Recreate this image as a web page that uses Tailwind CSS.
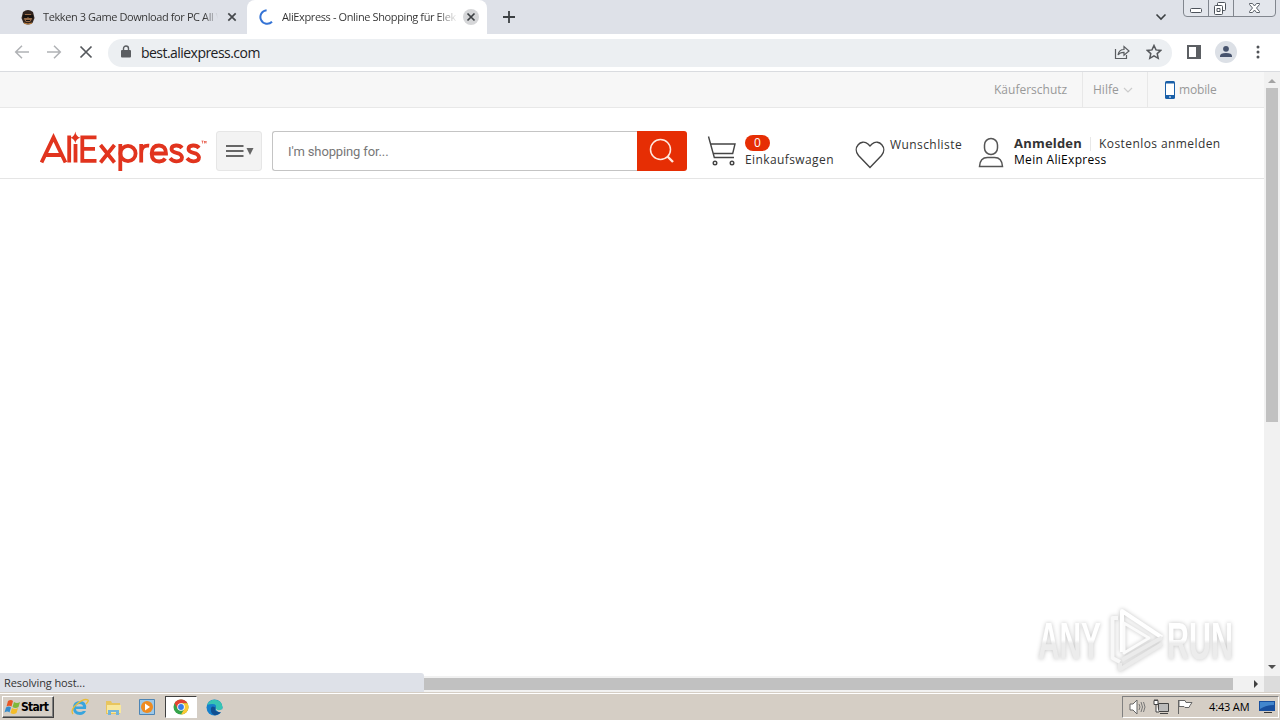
<!DOCTYPE html>
<html lang="de"><head><meta charset="utf-8"><title>AliExpress</title>
<script src="https://cdn.jsdelivr.net/npm/@tailwindcss/browser@4"></script></head>
<body class="w-[1280px] h-[720px] overflow-hidden bg-white flex flex-col font-['Open_Sans','Noto_Sans',sans-serif] text-[#333] whitespace-nowrap">
<!-- Tab strip -->
<div class="h-[34px] shrink-0 bg-[#dee1e8] flex">
  <div class="w-[247px] h-[34px] flex items-center pl-5">
    <svg class="w-4 h-4 shrink-0" viewBox="0 0 16 16"><path d="M3 3Q8-1 13 3l1.500 6-2 5Q8 17 3.500 14l-2-5z" fill="#30231d"/><path d="M5 5h6l1 5-2 3H6l-2-3z" fill="#976b48"/><path d="M3 6h10v3H9L8 8 7 9H3zM6 11h4v1H6z" fill="#17120f"/><path d="M4 14q4 2 8 0" stroke="#c9853d" fill="none"/></svg>
    <span class="ml-[7px] w-[175px] overflow-hidden text-[11px] tracking-[-0.4px] bg-linear-to-r from-[#333] from-92% to-transparent bg-clip-text text-transparent">Tekken 3 Game Download for PC All V</span>
    <svg class="w-[10px] h-[10px] ml-[9px] shrink-0" viewBox="0 0 10 10"><path d="M1.300 1.300l7.400 7.400m0-7.400l-7.400 7.400" stroke="#45484c" stroke-width="1.700"/></svg>
  </div>
  <div class="w-[240px] bg-white rounded-t-[8px] flex items-center pl-3">
    <svg class="w-4 h-4 shrink-0" viewBox="0 0 16 16"><path d="M7.600 1.200A6.800 6.800 0 1 0 13 12.800" stroke="#3473d5" stroke-width="2" fill="none"/></svg>
    <span class="ml-[7px] w-[176px] overflow-hidden text-[11px] tracking-[-0.38px] bg-linear-to-r from-[#333] from-88% to-transparent bg-clip-text text-transparent">AliExpress - Online Shopping für Elek</span>
    <svg class="w-4 h-4 ml-[5px] shrink-0" viewBox="0 0 16 16"><circle cx="8" cy="8" r="8" fill="#d5d6d8"/><path d="M4.500 4.500l7 7m0-7l-7 7" stroke="#3c4043" stroke-width="1.700"/></svg>
  </div>
  <svg class="w-3 h-3 ml-4 mt-[11px]" viewBox="0 0 12 12"><path d="M6 0v12M0 6h12" stroke="#3c4043" stroke-width="1.800"/></svg>
  <svg class="w-3 h-3 ml-[640px] mt-[11px]" viewBox="0 0 12 12"><path d="M1.500 3.500l4.500 4.500 4.500-4.500" stroke="#3c4043" stroke-width="1.600" fill="none"/></svg>
  <svg class="w-[94px] h-[18px] ml-4" viewBox="0 0 94 18"><path d="M.5-2v15q0 3.500 3.500 3.500h85q3.500 0 3.500-3.500V-2M25.500 0v16.500M50.500 0v16.500" fill="#e3e6ec" stroke="#81868e"/><rect x="7.500" y="8.500" width="11" height="4" rx="1" fill="#fff" stroke="#4d535b"/><g fill="#fff" stroke="#4d535b"><rect x="34.500" y="2.500" width="8" height="8" rx="1"/><rect x="31.500" y="5.500" width="8" height="9" rx="1"/><path d="M34 8.500h3v3h-3z"/></g><path d="M66.500 3.500h3l2 2.500 2-2.500h3v1l-3 3.500 3 3.500v1h-3l-2-2.500-2 2.500h-3v-1l3-3.500-3-3.500z" fill="#fff" stroke="#5a6068"/></svg>
</div>
<!-- Toolbar -->
<div class="h-[38px] shrink-0 border-b border-[#dadce0] flex items-center">
  <svg class="w-[94px] h-[16px] shrink-0 -mt-[2px]" viewBox="0 0 94 16"><g fill="none" stroke-width="1.500"><path d="M29 8H16m6-6.200L15.700 8 22 14.200M47 8h13.500M54 1.800L60.300 8 54 14.200" stroke="#b0b2b5"/><path d="M80.500 2.500l11 11m0-11l-11 11" stroke="#55585c" stroke-width="1.700"/></g></svg>
  <div class="w-[1064px] h-[28px] ml-[14px] rounded-full bg-[#eceff2] flex items-center">
    <svg class="w-[10px] h-[13px] ml-[13px] -mt-[2px]" viewBox="0 0 10 13"><path d="M2.500 6V3.500a2.500 2.500 0 0 1 5 0V6" fill="none" stroke="#5a5d61" stroke-width="1.400"/><rect y="5" width="10" height="7.500" rx="1" fill="#5a5d61"/></svg>
    <span class="ml-[10px] w-[120px] text-[14px] tracking-[-0.54px] text-[#202124]">best.aliexpress.com</span>
    <svg class="w-4 h-4 ml-[853px] -mt-px" viewBox="0 0 16 16"><path d="M1.500 5v9.500h11V11" fill="none" stroke="#5a5d61" stroke-width="1.200"/><path d="M4 11q1-5.500 6-5.500V2.500L15 7l-5 4.300V8.400Q6 8.300 4 11z" fill="none" stroke="#5a5d61" stroke-width="1.200"/></svg>
    <svg class="w-4 h-4 ml-4 -mt-px" viewBox="0 0 16 16"><path d="M8 1.500l2 4.400 4.800.5-3.600 3.200 1 4.700L8 11.900l-4.200 2.400 1-4.700L1.200 6.400 6 5.900z" fill="none" stroke="#55585c" stroke-width="1.500"/></svg>
  </div>
  <svg class="w-[14px] h-[14px] ml-[15px] -mt-px" viewBox="0 0 14 14"><path d="M1 1h12v12H1z" fill="none" stroke="#5c5f63" stroke-width="2"/><path d="M9 1h4v12H9z" fill="#5c5f63"/></svg>
  <svg class="w-[22px] h-[22px] ml-[14px] -mt-px" viewBox="0 0 22 22"><circle cx="11" cy="11" r="11" fill="#dce0e6"/><circle cx="11" cy="7.800" r="2.900" fill="#47536d"/><path d="M5 16v-1q0-3 6-3t6 3v1z" fill="#47536d"/></svg>
  <svg class="w-1 h-[14px] ml-[19px] -mt-px" viewBox="0 0 4 14"><g fill="#505357"><circle cx="2" cy="2" r="1.500"/><circle cx="2" cy="7" r="1.500"/><circle cx="2" cy="12" r="1.500"/></g></svg>
</div>
<!-- Page and vertical scrollbar -->
<div class="h-[604px] shrink-0 flex">
  <main class="w-[1264px]">
    <div class="h-9 bg-[#f7f7f7] border-b border-[#e8e8e8] flex items-center text-[12px] text-[#999]">
      <span class="ml-[994px] w-[88px]">Käuferschutz</span>
      <div class="w-[65px] h-full border-l border-[#e8e8e8] pl-[10px] flex items-center">Hilfe<svg class="w-[10px] h-[6px] ml-1" viewBox="0 0 10 6"><path d="M1 1l4 4 4-4" fill="none" stroke="#ccc" stroke-width="1.200"/></svg></div>
      <div class="h-full border-l border-[#e8e8e8] pl-4 flex items-center"><svg class="w-[12px] h-[18px] mr-[3px]" viewBox="0 0 12 18"><rect x="1" width="10" height="18" rx="1.500" fill="#195fa8"/><path d="M2 2.500h8V14H2z" fill="#fff"/><path d="M5 15.500h2v1H5z" fill="#fff"/></svg><span class="tracking-[-0.15px]">mobile</span></div>
    </div>
    <div class="h-[71px] border-b border-[#e5e5e5] flex items-start">
      <svg class="w-[168px] h-[42px] ml-[40px] mt-[22px]" viewBox="0 0 168 42"><g fill="none" stroke="#e1341e" stroke-width="3.800"><path d="M1.500 32.500L13.500 7.500l12 25M6 25h15M29.200 5.500v27M35.500 14v18.500M56.500 7.300H42.300v23.500h14.200M43 18.800h12M60.500 15l14 17.500m0-17.500L60.500 32.500M80.300 14v27"/><circle cx="88" cy="23.500" r="7.600"/><path d="M101.200 14v18.500M101.200 23q0-8 8-7.300M112 23.500h14q0-8-7-8t-7.300 8q0 8 7.500 8 4 0 6-3M142 18q-2-2.700-6-2.500-4.500.3-4.500 3.500 0 2.800 5 3.800t5.500 4.500q0 4-5.500 4-4 0-6.500-3M159 18q-2-2.700-6-2.500-4.500.3-4.500 3.500 0 2.800 5 3.800t5.500 4.500q0 4-5.500 4-4 0-6.500-3"/></g><path d="M35.300 1.500q.7 5 5 6.300-4.300 1-5 5.500-.7-4.500-5-5.500 4.300-1.300 5-6.300z" fill="#e1341e"/><path d="M161.500 11h2m-1 0v2.500m2 0V11l.8 1.500.8-1.500v2.500" stroke="#e1341e" stroke-width=".6" fill="none"/></svg>
      <div class="w-[46px] h-[40px] ml-2 mt-[23px] rounded-[3px] bg-[#f3f3f3] border border-[#e6e6e6] flex items-center"><svg class="w-[30px] h-[14px] ml-[9px]" viewBox="0 0 30 14"><path d="M0 2h17.500M0 7h17.500M0 12h17.500" stroke="#666" stroke-width="2"/><path d="M20.500 4h7L24 11z" fill="#666"/></svg></div>
      <div class="w-[365px] h-[40px] ml-[10px] mt-[23px] border border-r-0 border-[#c4c4c4] rounded-l-[3px] pt-px pl-[15px] flex items-center font-['Roboto',sans-serif] text-[13px] text-[#777] tracking-[-0.13px]">I'm shopping for...</div>
      <div class="w-[50px] h-[40px] mt-[23px] rounded-r-[3px] bg-[#e62e04] flex items-center justify-center"><svg class="w-[26px] h-[26px]" viewBox="0 0 26 26"><circle cx="11.500" cy="11.500" r="10" fill="none" stroke="#ffe8df" stroke-width="1.500"/><path d="M18.500 18.500l5.500 5.500" stroke="#ffe8df" stroke-width="2.400"/></svg></div>
      <svg class="w-[30px] h-[32px] ml-[20px] mt-[27px]" viewBox="0 0 30 32"><path d="M1.500 1.500l5.800 21H27M3.800 9H28l-2.300 9.500H6.500" fill="none" stroke="#444" stroke-width="1.400"/><g fill="none" stroke="#444" stroke-width="1.400"><circle cx="8" cy="28" r="1.800"/><circle cx="25" cy="28" r="1.800"/></g></svg>
      <div class="w-[90px] ml-2 mt-[27px] text-[12px]"><div class="w-[25px] h-[16px] rounded-full bg-[#e62e04] text-white text-center leading-[16px]">0</div><div class="leading-[17px] tracking-[0.4px]">Einkaufswagen</div></div>
      <svg class="w-[30px] h-[29px] ml-[20px] mt-[32px]" viewBox="0 0 30 29"><path d="M15 27.500L3.500 15.500C-3 8 6-2 13 4l2 2 2-2c7-6 16 4 9.500 11.500z" fill="none" stroke="#444" stroke-width="1.400"/></svg>
      <span class="ml-[5px] mt-[28px] w-[72px] text-[12px] leading-[17px] tracking-[0.42px]">Wunschliste</span>
      <svg class="w-[26px] h-[31px] ml-[16px] mt-[29px]" viewBox="0 0 26 31"><rect x="6.500" y="1.500" width="13" height="16" rx="6.500" fill="none" stroke="#555" stroke-width="1.500"/><path d="M1.500 29.500h23q-.5-9-8-9h-7q-7.500 0-8 9z" fill="none" stroke="#555" stroke-width="1.500"/></svg>
      <div class="ml-[10px] mt-[27px] text-[12px] leading-[17px]"><div class="flex"><b class="w-[68px] text-[13px] tracking-[0.2px]">Anmelden</b><span class="ml-2 mr-2 w-px h-[14px] mt-[2px] bg-[#e8e8e8]"></span><span class="tracking-[0.42px]">Kostenlos anmelden</span></div><div class="-mt-px text-black tracking-[0.3px]">Mein AliExpress</div></div>
    </div>
    <div class="h-[497px] flex items-end justify-end">
      <svg class="w-[210px] h-[70px] mr-[20px] drop-shadow-[0_0_2px_#c4c4c4]" viewBox="0 0 210 70"><defs><linearGradient id="f" x1="0" y1="0" x2="0" y2="1"><stop offset="0.48" stop-color="#fff"/><stop offset="0.54" stop-color="#ececec"/></linearGradient></defs><g font-family="Liberation Sans Narrow, Liberation Sans, sans-serif" font-weight="700" font-size="52" fill="url(#f)"><text x="4" y="53" textLength="63" lengthAdjust="spacingAndGlyphs">ANY</text><text x="133" y="53" textLength="66" lengthAdjust="spacingAndGlyphs">RUN</text></g><g fill="none" stroke-width="4" stroke-linejoin="round"><path d="M84 12H78.500V52L86 56" stroke="#f8f8f8"/><path d="M88 46V5l40 26.500" stroke="#fff"/><path d="M90 17v30l25-15z" stroke="#fbfbfb" stroke-width="3"/><path d="M128 31.500L88 54M128 38L86 63.500V57" stroke="#ebebeb"/></g></svg>
    </div>
  </main>
  <div class="w-4 bg-[#f1f1f1] flex flex-col items-center"><svg class="w-2 h-4" viewBox="0 0 8 16"><path d="M0 11l4-4 4 4z" fill="#a3a3a3"/></svg><div class="w-[12px] h-[334px] bg-[#c1c1c1]"></div><svg class="w-2 h-4 mt-auto mb-1" viewBox="0 0 8 16"><path d="M0 9l4 4 4-4z" fill="#505050"/></svg></div>
</div>
<!-- Horizontal scrollbar with status bubble -->
<div class="h-4 shrink-0 bg-[#f1f1f1] flex items-center relative">
  <div class="absolute left-0 -top-[3px] w-[424px] h-[19px] bg-[#dee1e8] rounded-tr-[3px] pl-1 text-[11px] leading-[20px] tracking-[-0.1px]">Resolving host...</div>
  <div class="ml-[424px] w-[809px] h-3 bg-[#c1c1c1]"></div><svg class="w-2 h-2 ml-[20px]" viewBox="0 0 8 8"><path d="M1 0l4 4-4 4z" fill="#404040"/></svg><div class="ml-auto w-4 h-4 bg-[#dcdcdc]"></div>
</div>
<!-- Taskbar -->
<div class="h-7 shrink-0 bg-[#d5cec5] border-t border-[#d5cec5] shadow-[inset_0_1px_0_#fff] flex items-center">
  <div class="w-[52px] h-[22px] ml-[2px] mt-px border border-t-white border-l-white border-r-[#404040] border-b-[#404040] shadow-[inset_-1px_-1px_#808080] flex items-center pl-[1px] text-[12px] font-bold text-black font-['DejaVu_Sans_Condensed','DejaVu_Sans',sans-serif] tracking-[-0.7px]"><svg class="w-4 h-4 mr-px shrink-0" viewBox="0 0 16 16"><path d="M4 2q3-2 5 0L7.500 7.500Q5 6 2.500 7.500z" fill="#e95724"/><path d="M10 3q3 2 6 0l-1.500 5q-3 2-6 0z" fill="#7fb83b"/><path d="M2 8.500q3-2 5 0l-1.500 5q-2-2-5 0z" fill="#368ccc"/><path d="M8 9q3 2 6 0l-1.500 5q-3 2-6 0z" fill="#f4bc29"/></svg>Start</div>
  <svg class="w-[18px] h-[18px] ml-[17px] mt-px" viewBox="0 0 18 18"><path d="M15 11H5q0 3 4 3 2 0 3-1h3q-2 4-6 4-7 0-7-7t7-7q7 0 6 8zM5 8.500h7Q12 6 8.500 6T5 8.500z" fill="#39a5dd"/><path d="M2 16Q-1 12 6 6t11-4q1 1-2 4" stroke="#e9bd36" stroke-width="1.300" fill="none"/></svg>
  <svg class="w-[17px] h-[17px] ml-4 mt-px" viewBox="0 0 17 17"><path d="M1 2h5l1 2h8v11H1z" fill="#e8c55e"/><path d="M2 6h14v8H2z" fill="#f8e79c"/><path d="M3 16v-5h11v5h-3v-3H6v3z" fill="#73b4d8"/></svg>
  <svg class="w-4 h-4 ml-[17px] mt-px" viewBox="0 0 16 16"><path d="M.5.5h15v15H.5z" fill="#9dc8e8" stroke="#4d85b5"/><circle cx="8" cy="8" r="6" fill="#ee8b21"/><path d="M6 4.500l5 3.500-5 3.500z" fill="#fff"/></svg>
  <div class="w-[32px] h-[22px] ml-[10px] mt-px bg-white border border-t-[#404040] border-l-[#404040] border-r-white border-b-white flex items-center justify-center"><svg class="w-4 h-4" viewBox="0 0 16 16"><circle cx="8" cy="8" r="7.500" fill="#35a34a"/><path d="M1.500 4.250A7.500 7.500 0 0 1 14.500 4.250H8L4.750 10z" fill="#e44332"/><path d="M14.500 4.250A7.500 7.500 0 0 1 8 15.500L11.250 9.900 8 4.250z" fill="#fcc934"/><circle cx="8" cy="8" r="3.800" fill="#fff"/><circle cx="8" cy="8" r="2.900" fill="#387de8"/></svg></div>
  <svg class="w-[17px] h-[17px] ml-[9px] mt-px" viewBox="0 0 17 17"><circle cx="8.500" cy="8.500" r="8" fill="#1680cb"/><path d="M1 6Q4 0 10 1t6.500 7q0 4-5 4-2 0-2-2 2-5-3-5Q3 5 1 6z" fill="#37c5b4"/><path d="M10 9q-3 4 5 4-3 4-7 3-4-2-3-7 1-3 5 0z" fill="#114f91"/><path d="M9.500 9q2 4 7 1v3q-6 1-7-4z" fill="#d5cec5"/></svg>
  <div class="w-[157px] h-[22px] ml-auto mr-px mt-px border border-t-[#808080] border-l-[#808080] border-r-white border-b-white flex items-center text-[11px] text-black">
    <svg class="w-[17px] h-[16px] ml-[6px]" viewBox="0 0 17 16"><path d="M1 5h3l4-4v14l-4-4H1z" fill="#fff" stroke="#666"/><path d="M10 5q2 3 0 6M12 3q3 5 0 10M14.500 3q3 5 0 10" fill="none" stroke="#777"/></svg>
    <svg class="w-4 h-4 ml-[7px]" viewBox="0 0 16 16"><path d="M5.500 4.500h10v8h-10z" fill="#bbb" stroke="#444"/><path d="M7 14.500h8M1 1.500h4v4H1zM3 5v8h3M2 0v2m2-2v2" fill="#fff" stroke="#444"/></svg>
    <svg class="w-4 h-4 ml-2" viewBox="0 0 16 16"><path d="M1.500 1v14M2 1.500h6l1 2h6l-2 3-1 2H8l-1-1H2z" fill="#fff" stroke="#666"/></svg>
    <span class="ml-4 w-[42px] tracking-[-0.15px]">4:43 AM</span>
    <svg class="w-4 h-4 ml-[8px]" viewBox="0 0 16 16"><path d="M0 2h16v10H0z" fill="#184f9e"/><path d="M1 3h14v3Q7 6 1 10z" fill="#4286cd"/><path d="M5 13h8v1H5z" fill="#333"/></svg>
  </div>
</div>
</body></html>
